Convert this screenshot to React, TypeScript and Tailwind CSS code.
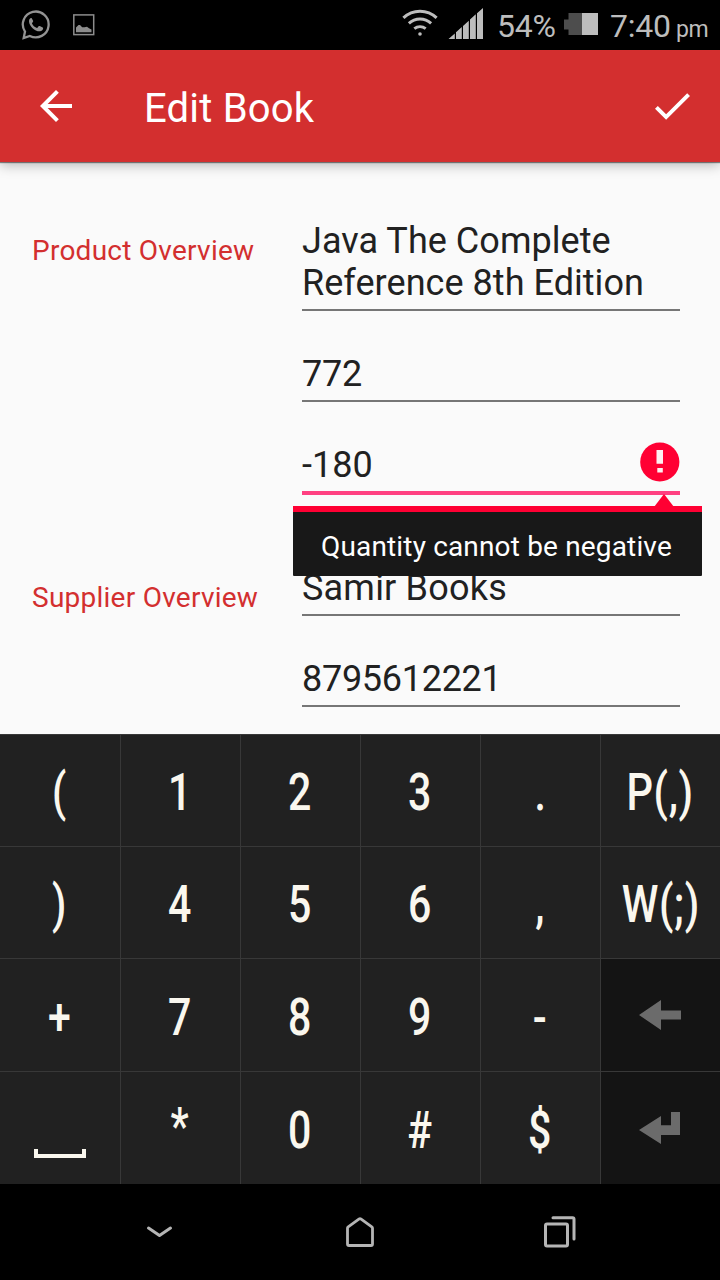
import type { ReactNode } from "react";

function WhatsAppIcon() {
  return (
    <svg className="absolute left-[20px] top-[9px]" width="31" height="32" viewBox="0 0 31 32" fill="none">
      <path d="M3.700 29 5 22.600A12.900 12.900 0 1 1 9.800 26.900Z" stroke="#939393" strokeWidth="2.300" />
      <path
        d="M10.800 9c-.8.300-1.800 1.600-1.800 3.300 0 2.700 1.800 5 3.600 6.900 2 2.100 5 3.300 7.400 3.100 1.500-.1 2.800-1.300 3-2.300.2-.8.2-1.100-.3-1.400l-3-1.600c-.5-.2-.8-.1-1.100.3l-1.200 1.400c-.3.300-.6.300-1 .1-1.900-.9-3.400-2.300-4.300-4.100-.2-.4-.1-.6.200-.9l.7-1c.2-.3.200-.6.100-1L11.700 9.300c-.2-.4-.4-.4-.9-.3Z"
        fill="#939393"
      />
    </svg>
  );
}

function StatusBar() {
  return (
    <div className="relative h-[50px] shrink-0 bg-black text-[#bdbdbd]">
      <WhatsAppIcon />
      <svg className="absolute left-[73px] top-[14px]" width="22" height="22" viewBox="0 0 22 22">
        <rect x="0.8" y="0.9" width="19.9" height="19.700" fill="none" stroke="#8c8c8c" strokeWidth="1.500" />
        <path d="M3 18.200V13.500L5.500 11H7L9.200 13.200 11.500 13.300 14 12.800 16 14.300 18.500 15.500V18.200Z" fill="#8c8c8c" />
      </svg>
      <svg className="absolute left-[402px] top-[8px]" width="36" height="28" viewBox="0 0 36 28" fill="none" stroke="#bdbdbd" strokeWidth="3">
        <path d="M1.400 9.900A24 24 0 0 1 34.600 9.900" />
        <path d="M6.900 15.400A16.500 16.500 0 0 1 29.100 15.400" />
        <path d="M12.300 20.600A9.500 9.500 0 0 1 23.700 20.600" />
        <circle cx="18" cy="26" r="1.800" fill="#bdbdbd" stroke="none" />
      </svg>
      <svg className="absolute left-[448px] top-[8px]" width="36" height="31" viewBox="0 0 36 31" fill="#bdbdbd">
        <path d="M0.500 31 6.800 25.400V31ZM8 24.300 13.800 19V31H8ZM15 18 20.800 12.700V31H15ZM22 11.600 27.800 6.300V31H22ZM29 5.200 35 0V31H29Z" />
      </svg>
      <span className="absolute left-[497px] top-[7px] text-[32px] leading-[38px] tracking-[-0.200px]">54%</span>
      <svg className="absolute left-[564px] top-[13px]" width="34" height="22" viewBox="0 0 34 22">
        <path d="M0 6.500H4.500V0H18V22H4.500V16.500H0Z" fill="#4d4d4d" />
        <rect x="18" width="16" height="22" fill="#bdbdbd" />
      </svg>
      <span className="absolute left-[610px] top-[7px] text-[32px] leading-[38px] tracking-[-0.200px]">7:40</span>
      <span className="absolute left-[676px] top-[16px] text-[23px] leading-[28px] tracking-[-0.300px]">pm</span>
    </div>
  );
}

function AppBar() {
  return (
    <header className="relative z-10 flex h-[112px] shrink-0 items-center bg-[#d32f2f] shadow-[0_1px_1px_rgba(0,0,0,0.45),0_3px_12px_rgba(0,0,0,0.28)]">
      <svg className="ml-[40px] shrink-0" width="32" height="32" viewBox="4 4 16 16" fill="#fff">
        <path d="M20 11H7.830l5.590-5.590L12 4l-8 8 8 8 1.410-1.410L7.830 13H20v-2z" />
      </svg>
      <h1 className="ml-[72px] mt-[6px] text-[40px] leading-[48px] tracking-[0.200px] text-white">Edit Book</h1>
      <svg className="ml-auto mr-[30px] shrink-0" width="35" height="27" viewBox="3.410 5.590 17.590 13.410" fill="#fff">
        <path d="M9 16.170L4.830 12l-1.420 1.410L9 19 21 7l-1.410-1.410z" />
      </svg>
    </header>
  );
}

function Field({ children, error, tracking = "tracking-[0.040px]" }: { children: ReactNode; error?: string; tracking?: string }) {
  return (
    <div className={error ? "relative h-[49px]" : "border-b-2 border-[#767676] pb-[5px]"}>
      <div className={error ? "h-[51px] border-b-4 border-[#ff4081]" : ""}>
        <p className={"text-[36px] leading-[42px] text-[#212121] " + tracking}>{children}</p>
      </div>
      {error && (
        <>
          <svg className="absolute right-0 top-[-2px]" width="40" height="40" viewBox="0 0 40 40">
            <circle cx="19.800" cy="20" r="19.600" fill="#ff0033" />
            <path d="M16.500 8H23V21.700H16.500ZM17.300 26H22.800V30.500H17.300Z" fill="#fdf0f2" />
          </svg>
          <svg className="absolute right-[6px] top-[50px]" width="20" height="13" viewBox="0 0 20 13">
            <path d="M10 0 20 13H0Z" fill="#ff0033" />
          </svg>
          <div className="absolute left-[-9px] top-[62px] h-[70px] w-[409px] rounded-b-[1px] border-t-[6px] border-[#ff0033] bg-[#181818] pl-[28px] pt-[18px] text-[28px] leading-[34px] tracking-[0.160px] whitespace-nowrap text-white">
            {error}
          </div>
        </>
      )}
    </div>
  );
}

function Section({ label, children }: { label: string; children: ReactNode }) {
  return (
    <section className="flex pr-[40px] pl-[32px]">
      <h2 className="mt-[14px] w-[270px] shrink-0 text-[28px] leading-[34px] tracking-[0.250px] whitespace-nowrap text-[#d32f2f]">{label}</h2>
      <div className="flex flex-1 flex-col gap-[42px]">{children}</div>
    </section>
  );
}

const rows: string[][] = [
  ["(", "1", "2", "3", ".", "P(,)"],
  [")", "4", "5", "6", ",", "W(;)"],
  ["+", "7", "8", "9", "-", "delete"],
  ["space", "*", "0", "#", "$", "enter"],
];

function KeyFace({ name }: { name: string }) {
  if (name === "delete")
    return (
      <svg className="mt-[-1px] mr-[2px]" width="42" height="30" viewBox="0 0 42 30" fill="#6b6b6b">
        <path d="M0 15 22 0V10.500H42V19.500H22V30Z" />
      </svg>
    );
  if (name === "enter")
    return (
      <svg className="mr-[2px]" width="41" height="32" viewBox="0 0 41 32" fill="#6b6b6b">
        <path d="M0 18 22 4V13.200H32V0H41V23H22V32Z" />
      </svg>
    );
  if (name === "space") return <span className="mt-[51px] h-[9px] w-[52px] border-x-4 border-b-4 border-[#faf7ee]" />;
  return (
    <span
      className={
        "text-[52px] leading-[60px] font-medium " +
        (name === "*" ? "mb-[3px] " : "mt-[5px] ") +
        (name.length > 1 ? "scale-x-[0.800] tracking-[0.800px]" : "mr-[1px] scale-x-[0.790]")
      }
    >
      {name}
    </span>
  );
}

function Keyboard() {
  return (
    <div className="grid h-[450px] shrink-0 grid-rows-[112px_112px_113px_113px] bg-[#212121] text-[#faf7ee]">
      {rows.map((row, r) => (
        <div key={r} className="grid grid-cols-6 border-t border-[#383838]">
          {row.map((k, c) => (
            <div
              key={k}
              className={
                "flex items-center justify-center border-[#383838] " +
                (c > 0 ? "border-l " : "") +
                (k === "delete" || k === "enter" ? "bg-[#141414]" : "")
              }
            >
              <KeyFace name={k} />
            </div>
          ))}
        </div>
      ))}
    </div>
  );
}

function NavBar() {
  return (
    <nav className="grid h-[96px] shrink-0 grid-cols-[60px_200px_199px_201px_60px] items-center bg-black">
      <span />
      <svg className="mx-auto" width="28" height="14" viewBox="0 0 28 14" fill="none" stroke="#b5b5b5" strokeWidth="3" strokeLinecap="round" strokeLinejoin="round">
        <path d="M2.500 3 13.500 10.500 24.500 3" />
      </svg>
      <svg className="mx-auto" width="30" height="32" viewBox="0 0 30 32" fill="none" stroke="#b5b5b5" strokeWidth="2.800" strokeLinejoin="round">
        <path d="M2.500 12.200Q2.500 11.300 3.200 10.800L14.200 2.900Q15 2.400 15.800 2.900L26.800 10.800Q27.500 11.300 27.500 12.200V28Q27.500 29.500 26 29.500H4Q2.500 29.500 2.500 28Z" />
      </svg>
      <svg className="mx-auto" width="32" height="32" viewBox="0 0 32 32" fill="none" stroke="#b5b5b5" strokeWidth="3" strokeLinecap="round" strokeLinejoin="round">
        <rect x="1.500" y="8" width="22" height="22" rx="1.500" />
        <path d="M9 1.800H28.500A1.500 1.500 0 0 1 30 3.300V23" />
      </svg>
      <span />
    </nav>
  );
}

export default function App() {
  return (
    <div className="flex h-[1280px] w-[720px] flex-col overflow-hidden bg-[#fafafa] font-['Roboto',sans-serif]">
      <StatusBar />
      <AppBar />
      <main className="flex flex-1 flex-col gap-[74px] overflow-hidden pt-[58px]">
        <div className="relative z-10">
          <Section label="Product Overview">
            <Field>Java The Complete Reference 8th Edition</Field>
            <Field tracking="tracking-[-0.200px]">772</Field>
            <Field error="Quantity cannot be negative">-180</Field>
          </Section>
        </div>
        <Section label="Supplier Overview">
          <Field tracking="tracking-[0.200px]">Samir Books</Field>
          <Field tracking="tracking-[-0.280px]">8795612221</Field>
        </Section>
      </main>
      <Keyboard />
      <NavBar />
    </div>
  );
}
